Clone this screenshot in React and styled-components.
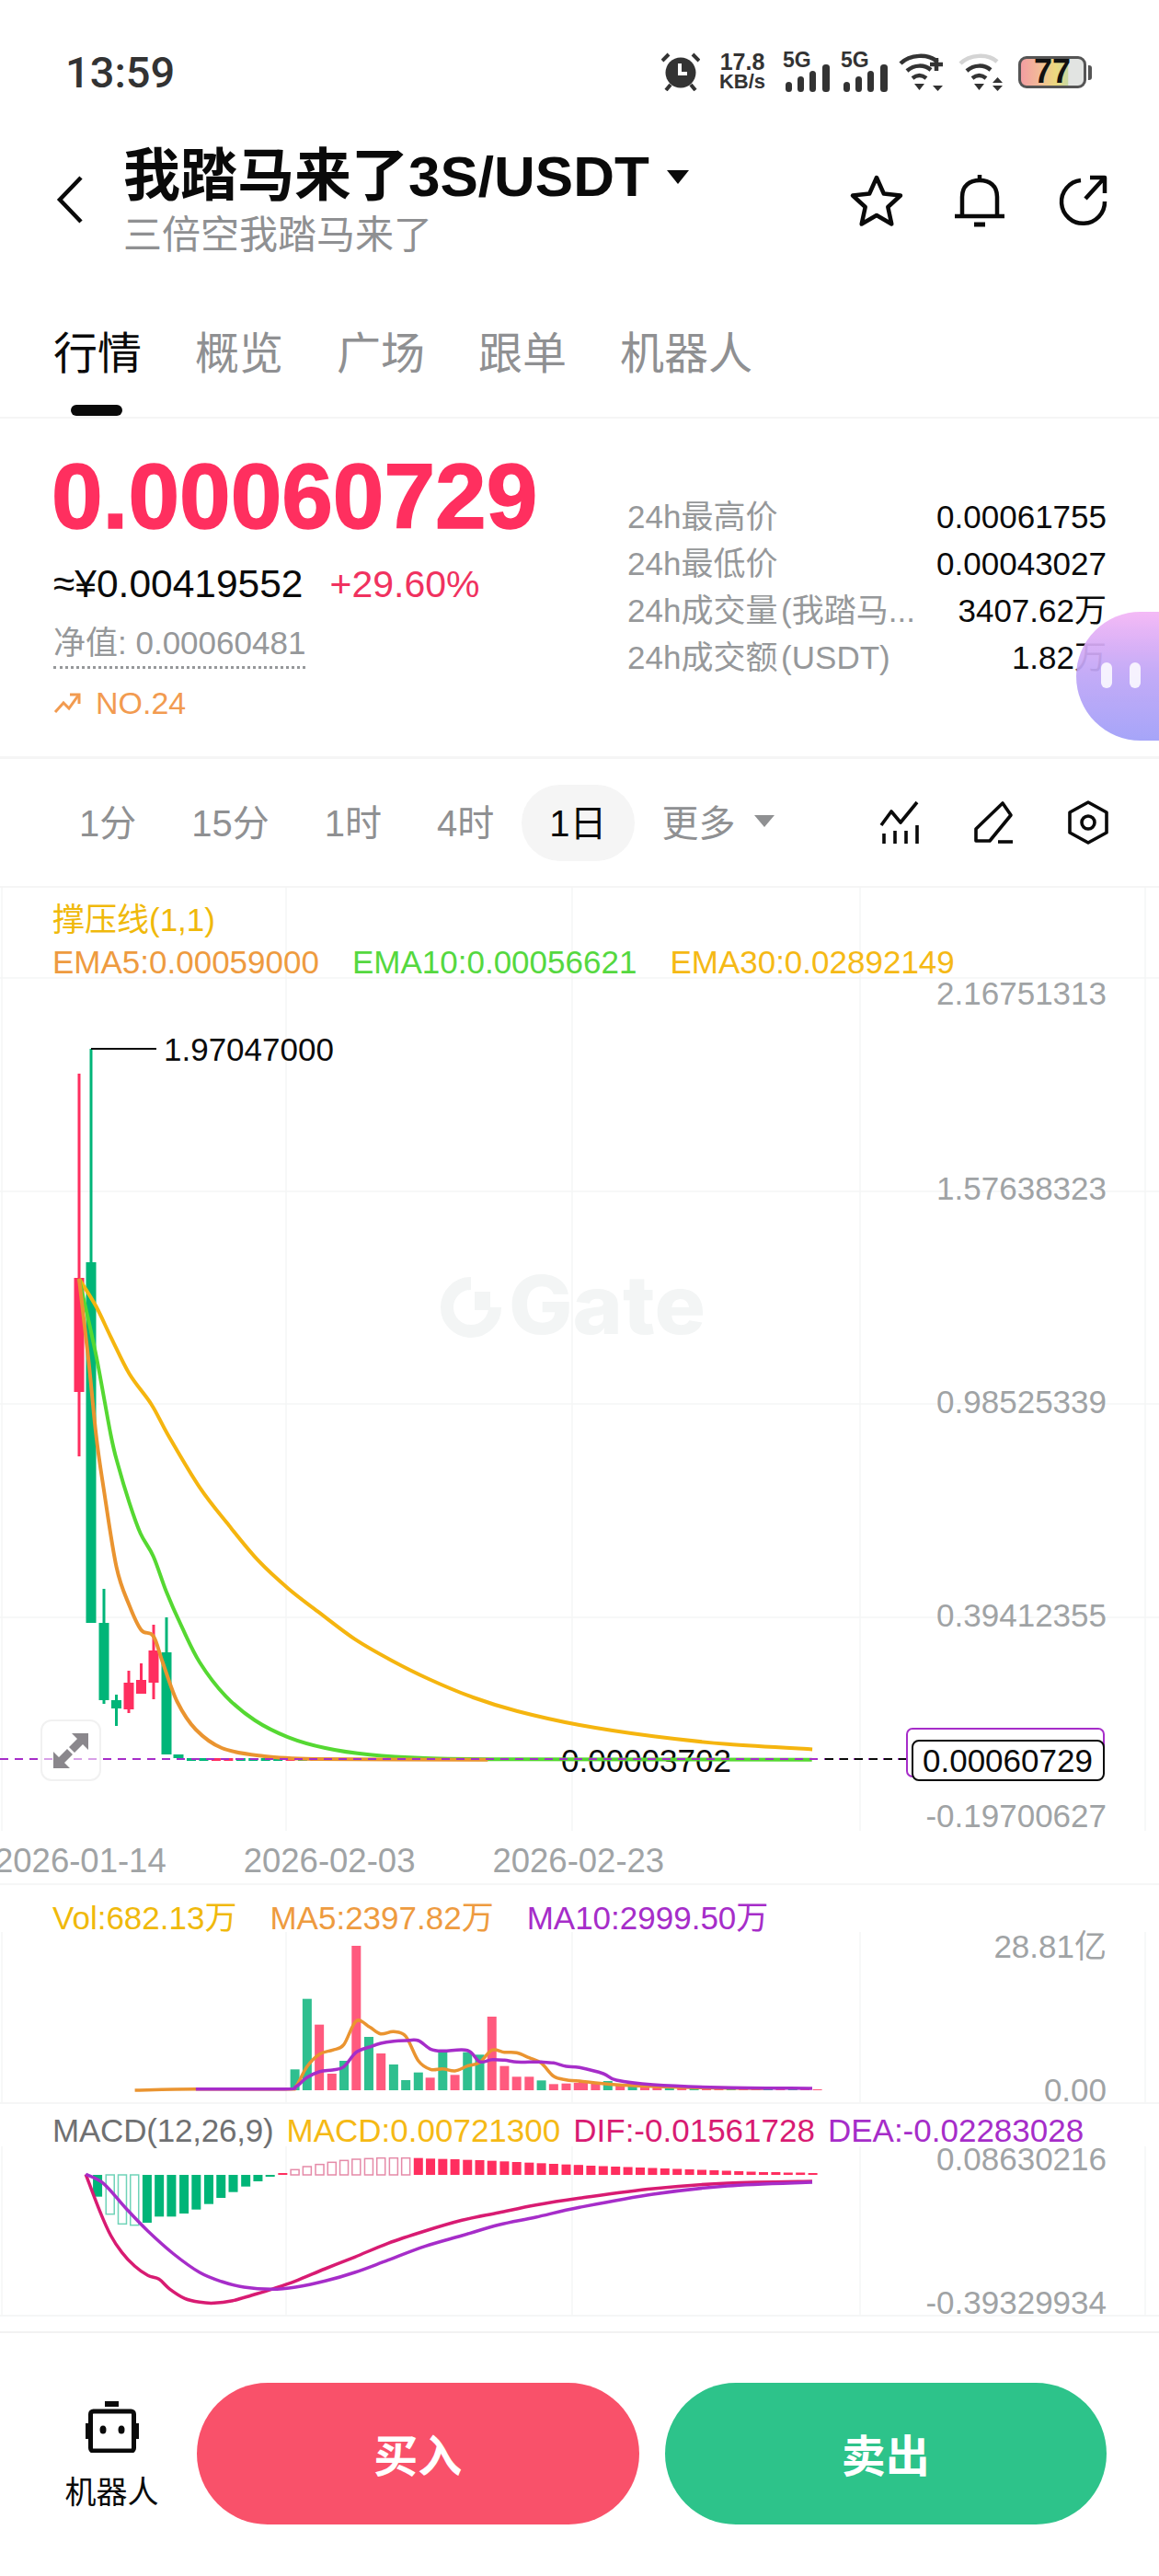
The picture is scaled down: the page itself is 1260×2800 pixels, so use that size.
import React from "react";
import styled, { createGlobalStyle } from "styled-components";

const SANS = `"Liberation Sans", "Noto Sans CJK SC", sans-serif`;

const Global = createGlobalStyle`
  html, body { margin: 0; padding: 0; background: #fff; }
  body { font-family: ${SANS}; }
`;

const Page = styled.div`
  position: relative;
  width: 1260px;
  height: 2800px;
  overflow: hidden;
  background: #fff;
  display: flex;
  flex-direction: column;
`;

/* ---------- status bar ---------- */
const StatusBar = styled.div`
  height: 156px;
  flex: none;
  display: flex;
  align-items: center;
  justify-content: space-between;
  padding: 0 68px 0 71px;
  box-sizing: border-box;
`;
const Clock = styled.span`
  font: 500 47px Roboto, sans-serif;
  color: #333;
`;
const StatusIcons = styled.div`
  display: flex;
  align-items: center;
  gap: 13px;
`;
const Speed = styled.div`
  display: flex;
  flex-direction: column;
  align-items: center;
  width: 62px;
  color: #333;
  font-weight: 700;
  line-height: 21px;
  margin-left: 2px;
`;
const SpeedValue = styled.span`font-size: 25px;`;
const SpeedUnit = styled.span`font-size: 22px;`;
const Signal = styled.div`
  position: relative;
  width: 50px;
  height: 42px;
`;
const SignalLabel = styled.span`
  position: absolute;
  left: 0;
  top: -5px;
  font-size: 23px;
  font-weight: 700;
  color: #333;
`;
const Battery = styled.div`
  position: relative;
  width: 74px;
  height: 35px;
  border: 3px solid #555;
  border-radius: 9px;
  box-sizing: border-box;
  background: linear-gradient(90deg, #f39ea2 0%, #f2b998 28%, #ecd97f 55%, #c9d9a2 75%, #e2e4e2 76%);
  display: flex;
  align-items: center;
  justify-content: center;
  font-size: 36px;
  font-weight: 700;
  color: #111;
  margin-right: 11px;
  &::after {
    content: "";
    position: absolute;
    right: -9px;
    top: 7px;
    width: 4px;
    height: 16px;
    background: #555;
    border-radius: 0 3px 3px 0;
  }
`;

/* ---------- header ---------- */
const Header = styled.div`
  height: 184px;
  flex: none;
  display: flex;
  align-items: flex-start;
  padding: 0 53px 0 60px;
  box-sizing: border-box;
`;
const BackIcon = styled.svg`
  width: 32px;
  height: 54px;
  margin-top: 34px;
  flex: none;
`;
const TitleBlock = styled.div`
  margin-left: 42px;
  display: flex;
  flex-direction: column;
`;
const TitleRow = styled.div`
  display: flex;
  align-items: center;
  height: 72px;
`;
const Title = styled.span`
  font-size: 62px;
  font-weight: 700;
  color: #0a0a0a;
  line-height: 72px;
  white-space: nowrap;
`;
const Subtitle = styled.span`
  font-size: 42px;
  line-height: 56px;
  color: #8f9092;
`;
const Caret = styled.span`
  width: 0;
  height: 0;
  border-left: ${(p) => p.$size}px solid transparent;
  border-right: ${(p) => p.$size}px solid transparent;
  border-top: ${(p) => p.$size * 1.25}px solid ${(p) => p.$color};
  margin-left: ${(p) => p.$gap}px;
`;
const HeaderActions = styled.div`
  margin-left: auto;
  margin-top: 32px;
  display: flex;
  gap: 52px;
`;
const ActionIcon = styled.svg`
  width: 60px;
  height: 60px;
  fill: none;
  stroke: #0a0a0a;
  stroke-width: 4.5;
  stroke-linejoin: round;
`;

/* ---------- tabs ---------- */
const Tabs = styled.div`
  height: 115px;
  flex: none;
  display: flex;
  gap: 58px;
  padding-left: 58px;
  box-sizing: border-box;
  border-bottom: 2px solid #f5f5f5;
`;
const Tab = styled.div`
  position: relative;
  font-size: 48px;
  line-height: 90px;
  color: ${(p) => (p.$active ? "#0a0a0a" : "#8f9092")};
  &::after {
    content: "";
    display: ${(p) => (p.$active ? "block" : "none")};
    position: absolute;
    left: 19px;
    bottom: 1px;
    width: 56px;
    height: 12px;
    border-radius: 6px;
    background: #0a0a0a;
  }
`;

/* ---------- quote ---------- */
const Quote = styled.div`
  height: 370px;
  flex: none;
  display: flex;
  box-sizing: border-box;
  border-bottom: 3px solid #f5f5f5;
`;
const QuoteLeft = styled.div`
  width: 682px;
  flex: none;
  padding: 29px 0 0 56px;
  box-sizing: border-box;
  display: flex;
  flex-direction: column;
  align-items: flex-start;
`;
const Price = styled.div`
  font-size: 100px;
  font-weight: 700;
  line-height: 110px;
  color: #ff2f5f;
  -webkit-text-stroke: 1.5px #ff2f5f;
`;
const SubPrice = styled.div`
  margin: 16px 0 0 2px;
  display: flex;
  align-items: baseline;
  gap: 29px;
  line-height: 50px;
`;
const Fiat = styled.span`
  color: #0a0a0a;
  font-size: 42.5px;
`;
const Change = styled.span`
  color: #f0325f;
  font-size: 41px;
`;
const NetValue = styled.div`
  margin: 14px 0 0 2px;
  font-size: 35px;
  line-height: 50px;
  color: #96989a;
  border-bottom: 3px dotted #96989a;
`;
const Rank = styled.div`
  margin: 15px 0 0 2px;
  display: flex;
  align-items: center;
  gap: 16px;
  font-size: 34px;
  line-height: 44px;
  color: #f29b50;
`;
const Stats = styled.div`
  flex: 1;
  padding: 81px 57px 0 0;
  display: flex;
  flex-direction: column;
`;
const StatRow = styled.div`
  display: flex;
  justify-content: space-between;
  font-size: 35px;
  line-height: 51px;
`;
const StatLabel = styled.span`
  color: #96989a;
  word-spacing: -6px;
`;
const StatValue = styled.span`color: #0a0a0a;`;

const Blob = styled.div`
  position: absolute;
  right: 0;
  top: 665px;
  width: 90px;
  height: 140px;
  border-radius: 72px 0 0 72px;
  background: linear-gradient(180deg, #f4b5f6 0%, #c2a6f7 45%, #9f9ef8 100%);
  opacity: 0.93;
`;
const BlobEye = styled.span`
  position: absolute;
  top: 55px;
  left: ${(p) => p.$left}px;
  width: 12px;
  height: 28px;
  border-radius: 6px;
  background: rgba(255, 255, 255, 0.85);
`;

/* ---------- intervals ---------- */
const Intervals = styled.div`
  height: 140px;
  flex: none;
  display: flex;
  align-items: center;
  padding: 0 53px 0 56px;
  box-sizing: border-box;
  border-bottom: 2px solid #f5f5f5;
`;
const Interval = styled.div`
  height: 83px;
  padding: 0 30px 4px;
  box-sizing: border-box;
  display: flex;
  align-items: center;
  font-size: 40px;
  border-radius: 42px;
  color: ${(p) => (p.$active ? "#0a0a0a" : "#8f9092")};
  background: ${(p) => (p.$active ? "#f5f5f5" : "transparent")};
`;
const Tools = styled.div`
  margin-left: auto;
  display: flex;
  gap: 54px;
`;
const ToolIcon = styled.svg`
  width: 48px;
  height: 48px;
  fill: none;
  stroke: #0a0a0a;
  stroke-width: 3.6;
  stroke-linejoin: round;
`;

/* ---------- chart panes ---------- */
const Pane = styled.div`
  position: relative;
  flex: none;
  height: ${(p) => p.$height}px;
  padding: ${(p) => p.$top}px 0 0 57px;
  box-sizing: border-box;
  border-bottom: ${(p) => (p.$line ? "2px solid #f5f6f6" : "none")};
`;
const PaneSvg = styled.svg`
  position: absolute;
  left: 0;
  top: 0;
  width: 1260px;
  height: 100%;
`;
const LegendRow = styled.div`
  position: relative;
  display: flex;
  gap: ${(p) => p.$gap}px;
  font-size: 35px;
  line-height: 46px;
  white-space: nowrap;
`;
const Legend = styled.span`
  color: ${(p) => p.$color};
  letter-spacing: ${(p) => p.$tight ? "-0.2px" : "0"};
`;
const AxisText = styled.text`
  font-family: ${SANS};
  font-size: 35px;
  fill: #a0a3a5;
  text-anchor: end;
`;
const MarkText = styled.text`
  font-family: ${SANS};
  font-size: 35px;
  fill: #0a0a0a;
`;
const Watermark = styled.text`
  font-family: Inter, ${SANS};
  font-size: 88px;
  font-weight: 800;
  fill: #f3f5f5;
`;
const DateRow = styled.div`
  height: 59px;
  flex: none;
  display: flex;
  gap: 84px;
  margin-left: -6px;
  padding-top: 10px;
  box-sizing: border-box;
  font-size: 36.5px;
  line-height: 46px;
  color: #a0a3a5;
  border-bottom: 2px solid #f5f6f6;
`;
const ExpandButton = styled.div`
  position: absolute;
  left: 44px;
  top: ${1869 - 965}px;
  width: 66px;
  height: 67px;
  box-sizing: border-box;
  border: 2px solid #f1f1f1;
  border-radius: 12px;
  background: rgba(255, 255, 255, 0.55);
  display: flex;
  align-items: center;
  justify-content: center;
`;

/* ---------- bottom bar ---------- */
const BottomBar = styled.div`
  margin-top: 16px;
  flex: 1;
  display: flex;
  align-items: flex-start;
  gap: 28px;
  padding: 54px 57px 0;
  box-sizing: border-box;
  border-top: 2px solid #f2f2f2;
`;
const RobotButton = styled.div`
  width: 129px;
  flex: none;
  padding-top: 20px;
  display: flex;
  flex-direction: column;
  align-items: center;
  gap: 21px;
  font-size: 34px;
  line-height: 44px;
  color: #0a0a0a;
`;
const TradeButton = styled.div`
  flex: 1;
  height: 154px;
  border-radius: 77px;
  background: ${(p) => p.$color};
  color: #fff;
  font-size: 48px;
  font-weight: 700;
  display: flex;
  align-items: center;
  justify-content: center;
  padding-bottom: 3px;
  box-sizing: border-box;
`;

/* ---------- chart data ---------- */
const z3 = (a) => a.map(([x, y]) => [x / 2.489, 1080 + y / 3]);
const z5 = (a) => a.map(([x, y]) => [x / 2.489, 1560 + y / 3]);
const z6 = (a) => a.map(([x, y]) => [x / 2.489, 2040 + y / 3]);
const z7 = (a) => a.map(([x, y]) => [630 + x / 2.489, 1800 + y / 2.12]);

const smooth = (pts) => {
  let d = `M${pts[0][0].toFixed(1)} ${pts[0][1].toFixed(1)}`;
  for (let i = 0; i < pts.length - 1; i++) {
    const p0 = pts[i - 1] || pts[i];
    const p1 = pts[i];
    const p2 = pts[i + 1];
    const p3 = pts[i + 2] || p2;
    const c1 = [p1[0] + (p2[0] - p0[0]) / 6, p1[1] + (p2[1] - p0[1]) / 6];
    const c2 = [p2[0] - (p3[0] - p1[0]) / 6, p2[1] - (p3[1] - p1[1]) / 6];
    d += `C${c1[0].toFixed(1)} ${c1[1].toFixed(1)} ${c2[0].toFixed(1)} ${c2[1].toFixed(1)} ${p2[0].toFixed(1)} ${p2[1].toFixed(1)}`;
  }
  return d;
};

const RED = "#ff2e5f";
const GREEN = "#00b578";

const candles = [
  [86, 1167, 1583, 1389, 1513, RED],
  [99, 1140, 1372, 1372, 1764, GREEN],
  [113, 1727, 1852, 1764, 1848, GREEN],
  [126.5, 1842, 1876, 1848, 1857, GREEN],
  [140, 1816, 1862, 1829, 1858, RED],
  [153.5, 1808, 1841, 1826, 1841, RED],
  [167, 1766, 1847, 1794, 1829, RED],
  [181, 1758, 1796, 1796, 1907, GREEN],
  [194, 1907, 1911, 1907, 1911, GREEN],
];

const flatColors = ["#00b578", "#00b578", "#ff2e5f", "#ff2e5f", "#00b578", "#00b578", "#00b578", "#00b578"];
const flats = Array.from({ length: 50 }, (_, i) => ({
  x: 203 + i * 13.45,
  color: i < 8 ? flatColors[i] : i % 3 === 0 ? "#00b578" : "#ff2e5f",
}));

const ema30 = [
  ...z3([[214, 930], [260, 1020], [300, 1120], [350, 1240], [410, 1340]]),
  ...z5([[455, 0], [540, 170], [620, 295], [700, 410], [780, 500], [860, 575], [960, 665], [1060, 735], [1160, 795], [1280, 855], [1400, 900], [1568, 945]]),
  ...z7([[200, 185], [400, 203], [630, 215]]),
];
const ema10 = [
  ...z3([[214, 930], [260, 1180]]),
  ...z5([[300, 0], [320, 100], [350, 220], [380, 320], [415, 395], [450, 510], [490, 620], [540, 740], [610, 850], [690, 930], [780, 985], [880, 1020], [1000, 1042], [1150, 1053], [1400, 1057], [2197, 1058]]),
];
const ema5 = [
  ...z3([[214, 930], [240, 1200]]),
  ...z5([[260, 0], [280, 170], [315, 430], [350, 555], [382, 635], [415, 655], [440, 740], [480, 870], [530, 960], [600, 1020], [700, 1045], [850, 1056], [1320, 1058]]),
];

const volBars = [
  [798, 628, 0], [831, 398, 0], [864, 482, 1], [898, 642, 1], [931, 600, 0], [964, 225, 1],
  [998, 522, 0], [1031, 576, 1], [1065, 612, 0], [1098, 663, 0], [1132, 638, 0], [1164, 655, 1],
  [1198, 572, 0], [1231, 646, 1], [1265, 572, 0], [1298, 580, 0], [1331, 456, 1], [1365, 617, 1],
  [1398, 652, 1], [1432, 652, 1], [1465, 664, 0], [1498, 676, 1], [1532, 674, 1], [1565, 672, 1],
];
const VOL_BASE = 2272;
const volTail = [9, 8, 10, 7, 6, 7, 5, 6, 4, 4, 3, 3, 3, 2, 2, 2, 2, 1, 1, 1];
const volTailColors = [1, 1, 0, 1, 0, 1, 1, 0, 1, 0, 1, 1, 0, 1, 1, 0, 1, 0, 1, 1];

const volMa5 = [
  ...z6([[365, 696], [530, 692], [770, 692], [800, 685], [830, 620], [865, 578], [900, 565], [930, 548], [964, 470], [1000, 490], [1030, 512], [1065, 505], [1098, 520], [1132, 600], [1165, 628], [1198, 626], [1231, 633], [1265, 617], [1298, 605], [1331, 565], [1365, 572], [1398, 574], [1432, 590], [1465, 608], [1498, 650], [1532, 662], [1568, 666]]),
  [670, 2266], [750, 2269], [830, 2270],
];
const volMa10 = [
  ...z6([[530, 692], [770, 692], [800, 685], [830, 655], [865, 635], [900, 630], [930, 620], [964, 572], [1000, 555], [1030, 543], [1065, 536], [1098, 534], [1132, 534], [1165, 562], [1198, 568], [1265, 566], [1298, 603], [1331, 596], [1365, 598], [1398, 604], [1432, 604], [1465, 604], [1498, 607], [1532, 618], [1568, 622]]),
  [656, 2254], [670, 2261], [710, 2266], [783, 2269], [883, 2270],
];

const MACD_ZERO = 2364;
const macdGreen = [
  [264, 1043, 0], [298, 1100, 1], [331, 1132, 1], [364, 1136, 1], [398, 1128, 0], [431, 1108, 0], [464, 1108, 0],
  [498, 1098, 0], [531, 1085, 0], [565, 1067, 0], [598, 1047, 0], [631, 1028, 0], [665, 1010, 0], [698, 993, 0], [731, 978, 0],
];
const macdRed = [
  [765, 966, 0], [798, 955, 1], [831, 945, 1], [865, 938, 1], [898, 931, 1], [931, 925, 1], [964, 921, 1], [998, 919, 1],
  [1031, 917, 1], [1065, 917, 1], [1098, 917, 1], [1132, 917, 0], [1165, 919, 0], [1198, 920, 0], [1231, 921, 0],
  [1265, 923, 0], [1298, 924, 0], [1331, 926, 0], [1365, 928, 0], [1398, 930, 0], [1432, 932, 0], [1465, 934, 0],
  [1498, 936, 0], [1532, 938, 0], [1565, 940, 0],
];
const macdTail = [10.5, 10, 9.5, 9, 8.5, 8, 7.5, 7, 6.5, 6, 5.5, 5, 4.5, 4, 3.5, 3, 3, 2.5, 2.5, 2];

const dif = [
  ...z6([[232, 970], [270, 1090], [300, 1170], [330, 1225], [365, 1270], [400, 1300], [430, 1312], [460, 1345], [500, 1375], [540, 1387], [580, 1390], [630, 1382], [680, 1365], [735, 1345], [800, 1318], [880, 1278], [960, 1240], [1050, 1195], [1150, 1155], [1250, 1120], [1350, 1095], [1450, 1070], [1568, 1048]]),
  [710, 2379], [791, 2373], [883, 2371],
];
const dea = [
  ...z6([[232, 970], [280, 1000], [340, 1080], [400, 1155], [470, 1230], [540, 1290], [600, 1320], [660, 1338], [735, 1345], [800, 1338], [880, 1318], [960, 1290], [1050, 1250], [1150, 1205], [1250, 1170], [1350, 1135], [1450, 1110], [1568, 1078]]),
  [710, 2385], [791, 2376], [883, 2372],
];

const vGrid = [2, 311, 622, 935, 1245];

const GridV = ({ y1, y2 }) =>
  vGrid.map((x) => <line key={x} x1={x} x2={x} y1={y1} y2={y2} stroke="#f5f6f6" strokeWidth="1.5" />);

/* ---------- small icons ---------- */
const AlarmIcon = () => (
  <svg width="42" height="42" viewBox="0 0 42 42">
    <circle cx="21" cy="22" r="16.5" fill="#333" />
    <path d="M20 12v11h8" fill="none" stroke="#fff" strokeWidth="4" />
    <path d="M1 9l7-7M41 9l-7-7M5 41l5-6M37 41l-5-6" stroke="#333" strokeWidth="4" fill="none" />
  </svg>
);
const SignalBars = () => (
  <svg width="50" height="30" viewBox="0 0 50 30" style={{ position: "absolute", left: 2, bottom: -1 }}>
    <rect x="1" y="19" width="7" height="11" rx="3.5" fill="#333" />
    <rect x="14" y="13" width="7" height="17" rx="3.5" fill="#333" />
    <rect x="27" y="7" width="7" height="23" rx="3.5" fill="#333" />
    <rect x="41" y="0" width="8" height="30" rx="3.5" fill="#333" />
  </svg>
);
const Wifi = ({ top, plus, both }) => (
  <svg width="52" height="42" viewBox="0 0 52 42" fill="none">
    <path d="M2 12C12 2 32 1 42 10" stroke={top} strokeWidth="4.5" />
    <path d="M9 20C17 13 28 13 35 19" stroke="#333" strokeWidth="4.5" />
    <path d="M15 28C20 24 25 24 30 28" stroke="#333" strokeWidth="4.5" />
    <path d="M17 34h11l-5.500 7z" fill="#333" />
    <path d="M37 36h11l-5.500 6z" fill="#333" />
    {both && <path d="M37 33h11l-5.500-6z" fill="#333" />}
    {plus && <path d="M41 6v14M34 13h14" stroke="#333" strokeWidth="4.500" />}
  </svg>
);

export default function App() {
  return (
    <Page>
      <Global />
      <StatusBar>
        <Clock>13:59</Clock>
        <StatusIcons>
          <AlarmIcon />
          <Speed>
            <SpeedValue>17.8</SpeedValue>
            <SpeedUnit>KB/s</SpeedUnit>
          </Speed>
          <Signal>
            <SignalLabel>5G</SignalLabel>
            <SignalBars />
          </Signal>
          <Signal>
            <SignalLabel>5G</SignalLabel>
            <SignalBars />
          </Signal>
          <Wifi top="#333" plus />
          <Wifi top="#d4d4d4" both />
          <Battery>77</Battery>
        </StatusIcons>
      </StatusBar>

      <Header>
        <BackIcon viewBox="0 0 32 54" fill="none" stroke="#0a0a0a" strokeWidth="4.5">
          <path d="M28 3L5 27l23 24" />
        </BackIcon>
        <TitleBlock>
          <TitleRow>
            <Title>我踏马来了3S/USDT</Title>
            <Caret $size={12} $color="#0a0a0a" $gap={19} />
          </TitleRow>
          <Subtitle>三倍空我踏马来了</Subtitle>
        </TitleBlock>
        <HeaderActions>
          <ActionIcon viewBox="0 0 60 60">
            <path d="M30 5l7.800 17.500L56 24.500 42.300 37l4 18.500L30 46l-16.300 9.500 4-18.500L4 24.500l18.200-2z" />
          </ActionIcon>
          <ActionIcon viewBox="0 0 60 60">
            <path d="M11 47V26C11 14 19 8 30 8s19 6 19 18v21" />
            <path d="M3 47h54M30 2v6" />
            <path d="M24 56h12" strokeWidth="5" />
          </ActionIcon>
          <ActionIcon viewBox="0 0 60 60">
            <path d="M28 8A23.500 23.500 0 1 0 54 31" />
            <path d="M33 28L53 6M38 5h16v17" />
          </ActionIcon>
        </HeaderActions>
      </Header>

      <Tabs>
        <Tab $active>行情</Tab>
        <Tab>概览</Tab>
        <Tab>广场</Tab>
        <Tab>跟单</Tab>
        <Tab>机器人</Tab>
      </Tabs>

      <Quote>
        <QuoteLeft>
          <Price>0.00060729</Price>
          <SubPrice>
            <Fiat>≈¥0.00419552</Fiat>
            <Change>+29.60%</Change>
          </SubPrice>
          <NetValue>净值: 0.00060481</NetValue>
          <Rank>
            <svg width="30" height="24" viewBox="0 0 30 24" fill="none" stroke="#f29b50" strokeWidth="3">
              <path d="M2 22l9-10 6 6 10-14" />
              <path d="M18 3h10v10" />
            </svg>
            NO.24
          </Rank>
        </QuoteLeft>
        <Stats>
          <StatRow>
            <StatLabel>24h最高价</StatLabel>
            <StatValue>0.00061755</StatValue>
          </StatRow>
          <StatRow>
            <StatLabel>24h最低价</StatLabel>
            <StatValue>0.00043027</StatValue>
          </StatRow>
          <StatRow>
            <StatLabel>24h成交量 (我踏马...</StatLabel>
            <StatValue>3407.62万</StatValue>
          </StatRow>
          <StatRow>
            <StatLabel>24h成交额 (USDT)</StatLabel>
            <StatValue>1.82万</StatValue>
          </StatRow>
        </Stats>
      </Quote>

      <Intervals>
        <Interval>1分</Interval>
        <Interval>15分</Interval>
        <Interval>1时</Interval>
        <Interval>4时</Interval>
        <Interval $active>1日</Interval>
        <Interval>
          更多
          <Caret $size={11} $color="#8f9092" $gap={20} />
        </Interval>
        <Tools>
          <ToolIcon viewBox="0 0 48 48">
            <path d="M3 27l11-15 10 12L42 2" />
            <path d="M6 36v11M18 33v14M30 33v14M42 27v20" />
          </ToolIcon>
          <ToolIcon viewBox="0 0 48 48">
            <path d="M33 3l9 13-23 28H4V31z" />
            <path d="M28 45h16" />
          </ToolIcon>
          <ToolIcon viewBox="0 0 48 48">
            <path d="M24 2l20 11v22L24 46 4 35V13z" />
            <circle cx="24" cy="24" r="7" />
          </ToolIcon>
        </Tools>
      </Intervals>

      <Pane $height={1025} $top={12}>
        <PaneSvg viewBox="0 965 1260 1025" preserveAspectRatio="none">
          <GridV y1={965} y2={1990} />
          {[1063, 1295, 1526, 1758].map((y) => (
            <line key={y} x1="0" x2="1260" y1={y} y2={y} stroke="#f5f6f6" strokeWidth="1.5" />
          ))}
          <path d="M512 1395A26 26 0 1 0 538 1421" fill="none" stroke="#f3f5f5" strokeWidth="14" />
          <path d="M516 1404h17v20h-17z" fill="#f3f5f5" />
          <Watermark x="553" y="1450" textLength="214" lengthAdjust="spacingAndGlyphs">
            Gate
          </Watermark>

          {candles.map(([x, wt, wb, bt, bb, c]) => (
            <g key={x}>
              <line x1={x} x2={x} y1={wt} y2={wb} stroke={c} strokeWidth="3" />
              <rect x={x - 5.5} y={bt} width="11" height={bb - bt} fill={c} />
            </g>
          ))}
          {flats.map((f) => (
            <rect key={f.x} x={f.x} y="1911" width="10" height="3" fill={f.color} />
          ))}
          <path d="M99 1140H170" stroke="#0a0a0a" strokeWidth="2" />
          <MarkText x="178" y="1153">1.97047000</MarkText>
          <path d="M530 1913H606" stroke="#0a0a0a" strokeWidth="2" />
          <MarkText x="610" y="1926">0.00003702</MarkText>

          <path d={smooth(ema30)} fill="none" stroke="#f5b50f" strokeWidth="4" />
          <path d={smooth(ema10)} fill="none" stroke="#55d832" strokeWidth="4" />
          <path d={smooth(ema5)} fill="none" stroke="#ea9430" strokeWidth="4" />

          <line x1="0" x2="985" y1="1912" y2="1912" stroke="#a62dc9" strokeWidth="2" strokeDasharray="9 7" />
          <line x1="891" x2="985" y1="1912" y2="1912" stroke="#0a0a0a" strokeWidth="2" strokeDasharray="9 7" strokeDashoffset="-6" />

          <rect x="986" y="1879" width="214" height="52" rx="6" fill="#fff" stroke="#a62dc9" strokeWidth="2" />
          <rect x="992" y="1892" width="208" height="43" rx="7" fill="#fff" stroke="#0a0a0a" strokeWidth="2" />
          <MarkText x="1003" y="1926">0.00060729</MarkText>

          <AxisText x="1203" y="1092">2.16751313</AxisText>
          <AxisText x="1203" y="1304">1.57638323</AxisText>
          <AxisText x="1203" y="1536">0.98525339</AxisText>
          <AxisText x="1203" y="1768">0.39412355</AxisText>
          <AxisText x="1203" y="1986">-0.19700627</AxisText>
        </PaneSvg>
        <LegendRow $gap={0}>
          <Legend $color="#f0b90b">撑压线(1,1)</Legend>
        </LegendRow>
        <LegendRow $gap={36}>
          <Legend $color="#ee9b3f">EMA5:0.00059000</Legend>
          <Legend $color="#55d83f">EMA10:0.00056621</Legend>
          <Legend $color="#f5b915">EMA30:0.02892149</Legend>
        </LegendRow>
        <ExpandButton>
          <svg width="42" height="42" viewBox="0 0 42 42" fill="#8a878c">
            <path d="M40 2v18l-6-6-9 9-6-6 9-9-6-6zM2 40V22l6 6 9-9 6 6-9 9 6 6z" />
          </svg>
        </ExpandButton>
      </Pane>

      <DateRow>
        <span>2026-01-14</span>
        <span>2026-02-03</span>
        <span>2026-02-23</span>
      </DateRow>

      <Pane $height={238} $top={13} $line>
        <PaneSvg viewBox="0 2049 1260 236" preserveAspectRatio="none">
          <GridV y1={2100} y2={2285} />
          {volBars.map(([x, top, red]) => {
            const y = 2040 + top / 3;
            return <rect key={x} x={x / 2.489 - 5} y={y} width="10" height={VOL_BASE - y} fill={red ? "#ff5a7e" : "#2fbf8f"} />;
          })}
          {volTail.map((h, i) => (
            <rect key={i} x={634 + i * 13.4 - 5} y={VOL_BASE - h} width="10" height={h} fill={volTailColors[i] ? "#ff5a7e" : "#2fbf8f"} />
          ))}
          <path d={smooth(volMa5)} fill="none" stroke="#ea9430" strokeWidth="3.5" />
          <path d={smooth(volMa10)} fill="none" stroke="#a62dc9" strokeWidth="3.5" />
          <AxisText x="1203" y="2128">28.81亿</AxisText>
          <AxisText x="1203" y="2284">0.00</AxisText>
        </PaneSvg>
        <LegendRow $gap={36}>
          <Legend $color="#f0b90b">Vol:682.13万</Legend>
          <Legend $color="#ee9b3f">MA5:2397.82万</Legend>
          <Legend $color="#a62dc9">MA10:2999.50万</Legend>
        </LegendRow>
      </Pane>

      <Pane $height={231} $top={6} $line>
        <PaneSvg viewBox="0 2287 1260 229" preserveAspectRatio="none">
          <GridV y1={2333} y2={2516} />
          {macdGreen.map(([x, b, hollow], i) => {
            const y = 2040 + b / 3;
            const thin = i === macdGreen.length - 1;
            return hollow ? (
              <rect key={x} x={x / 2.489 - 4.500} y={MACD_ZERO} width="9" height={y - MACD_ZERO} fill="none" stroke="#6fd3b8" strokeWidth="1.5" />
            ) : (
              <rect key={x} x={x / 2.489 - 5} y={MACD_ZERO} width="10" height={thin ? 2 : y - MACD_ZERO} fill={GREEN} />
            );
          })}
          {macdRed.map(([x, t, hollow]) => {
            const y = 2040 + t / 3;
            return hollow ? (
              <rect key={x} x={x / 2.489 - 4.500} y={y} width="9" height={MACD_ZERO - y} fill="none" stroke="#e58aa8" strokeWidth="1.5" />
            ) : (
              <rect key={x} x={x / 2.489 - 5} y={y} width="10" height={MACD_ZERO - y} fill={RED} />
            );
          })}
          {macdTail.map((h, i) => (
            <rect key={i} x={629 + i * 13.4 - 5} y={MACD_ZERO - h} width="10" height={h} fill={RED} />
          ))}
          <path d={smooth(dif)} fill="none" stroke="#d81b72" strokeWidth="3.5" />
          <path d={smooth(dea)} fill="none" stroke="#a62dc9" strokeWidth="3.5" />
          <AxisText x="1203" y="2359">0.08630216</AxisText>
          <AxisText x="1203" y="2515">-0.39329934</AxisText>
        </PaneSvg>
        <LegendRow $gap={14}>
          <Legend $color="#6f7072" $tight>MACD(12,26,9)</Legend>
          <Legend $color="#f5b915">MACD:0.00721300</Legend>
          <Legend $color="#d81b72">DIF:-0.01561728</Legend>
          <Legend $color="#a62dc9">DEA:-0.02283028</Legend>
        </LegendRow>
      </Pane>

      <BottomBar>
        <RobotButton>
          <svg width="60" height="56" viewBox="0 0 60 56" fill="none">
            <rect x="22" y="0" width="15" height="6" fill="#0a0a0a" />
            <rect x="6.500" y="11" width="47" height="43" rx="3" stroke="#0a0a0a" strokeWidth="5" />
            <rect x="1" y="24" width="4" height="17" fill="#0a0a0a" />
            <rect x="55" y="24" width="4" height="17" fill="#0a0a0a" />
            <ellipse cx="20" cy="31" rx="3.500" ry="4.500" fill="#0a0a0a" />
            <ellipse cx="40" cy="31" rx="3.500" ry="4.500" fill="#0a0a0a" />
          </svg>
          机器人
        </RobotButton>
        <TradeButton $color="#f9516a">买入</TradeButton>
        <TradeButton $color="#2dc38a">卖出</TradeButton>
      </BottomBar>

      <Blob>
        <BlobEye $left={27} />
        <BlobEye $left={58} />
      </Blob>
    </Page>
  );
}
